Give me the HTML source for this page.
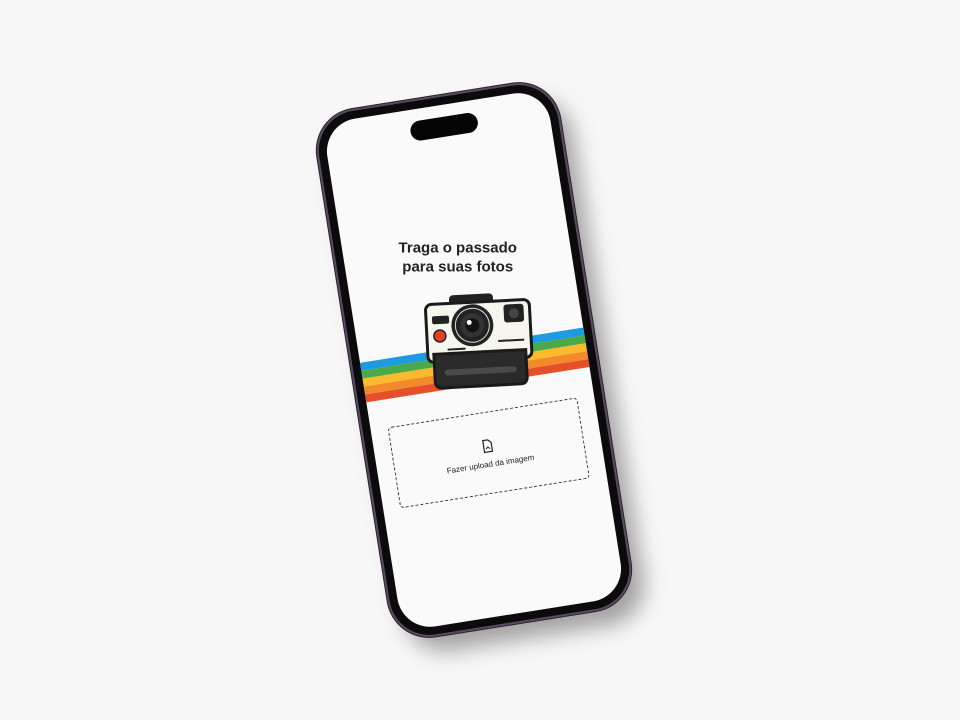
<!DOCTYPE html>
<html><head><style>
body{margin:0;width:960px;height:720px;background:#f7f7f7;overflow:hidden;font-family:"Liberation Sans",sans-serif}
.phone{position:absolute;left:353px;top:95px;width:242px;height:530px;transform:rotate(-9deg);border-radius:40px;background:#0b0a0d;box-shadow:0 0 0 2px #5a4a60,0 0 0 3px #2a2230,12px 18px 22px rgba(0,0,0,.35)}
.screen{position:absolute;left:8px;top:8px;right:8px;bottom:8px;border-radius:33px;background:#fafafa;overflow:hidden}
.island{position:absolute;left:86px;top:12px;width:68px;height:20px;border-radius:10px;background:#050505}
h1{position:absolute;left:0;right:0;top:134px;margin:0;text-align:center;font-size:15px;line-height:19px;font-weight:bold;color:#222;transform:rotate(9deg)}
.stripes{position:absolute;left:0;right:0;top:242px}
.stripes div{height:8px}
.box{position:absolute;left:17px;width:190px;top:310px;height:80px;border:1.3px dashed #333;border-radius:4px;text-align:center;font-size:8px;color:#222}
</style></head><body>
<div class="phone"><div class="screen">
<div class="island"></div>
<h1>Traga o passado<br>para suas fotos</h1>
<div class="stripes"><div style="background:#1e9be0"></div><div style="background:#4aaa4a"></div><div style="background:#fbb92d"></div><div style="background:#f38a2a"></div><div style="background:#e5502b"></div></div>
<svg style="position:absolute;left:63px;top:190px;transform:rotate(6deg)" width="116" height="100" viewBox="0 0 112 100">
<rect x="28" y="2" width="44" height="12" rx="4" fill="#222"/>
<rect x="4" y="10" width="104" height="58" rx="6" fill="#f7f6ee" stroke="#1a1a1a" stroke-width="3"/>
<path d="M10 60 H102 V88 a6 6 0 0 1-6 6 H16 a6 6 0 0 1-6-6Z" fill="#2a2a2a" stroke="#1a1a1a" stroke-width="3"/>
<rect x="20" y="76" width="72" height="6" rx="3" fill="#4a4a4a"/>
<rect x="10" y="22" width="17" height="8" rx="2" fill="#222"/>
<circle cx="17" cy="42" r="6" fill="#e54225" stroke="#222" stroke-width="1.5"/>
<circle cx="50" cy="33" r="21" fill="#222"/><circle cx="50" cy="33" r="17" fill="none" stroke="#ddd" stroke-width="1"/>
<circle cx="50" cy="33" r="12" fill="#333"/><circle cx="50" cy="33" r="7" fill="#111"/><circle cx="47" cy="30" r="2.5" fill="#fff"/>
<rect x="82" y="14" width="20" height="18" rx="3" fill="#222"/><circle cx="92" cy="23" r="5" fill="#444"/>
<path d="M75 50h26M24 56h18" stroke="#222" stroke-width="2"/>
</svg>
<div class="box"><svg style="margin-top:26px" width="12" height="14" viewBox="0 0 12 14"><path d="M2 1h5l3 3v9H2z" fill="none" stroke="#222" stroke-width="1.2"/><path d="M4 10l2-2 2 2" fill="none" stroke="#222"/></svg><div style="margin-top:5px">Fazer upload da imagem</div></div>
</div></div>
</body></html>
